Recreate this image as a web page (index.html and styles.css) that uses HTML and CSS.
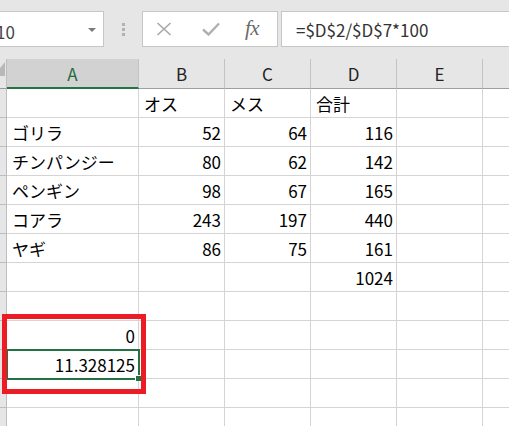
FILE: index.html
```html
<!DOCTYPE html>
<html lang="ja">
<head>
<meta charset="utf-8">
<link rel="stylesheet" href="styles.css">
</head>
<body>
<div class="app">
  <div class="toolbar">
    <div class="namebox">
      <span class="namebox-text">10</span>
      <svg class="dropdown" width="8" height="4" viewBox="0 0 8 4"><polygon points="0,0 8,0 4,4" fill="#7a7a7a"/></svg>
    </div>
    <div class="grip"><span></span><span></span><span></span></div>
    <div class="iconbox">
      <svg class="ico" width="16" height="14" viewBox="0 0 16 14"><path d="M1.5 1 L14.5 13 M14.5 1 L1.5 13" stroke="#a8a8a8" stroke-width="1.6" fill="none"/></svg>
      <svg class="ico" width="18" height="14" viewBox="0 0 18 14"><path d="M1 7.5 L6.5 12.5 L17 1.5" stroke="#b0b0b0" stroke-width="2.4" fill="none"/></svg>
      <span class="fx">fx</span>
    </div>
    <div class="formula">=$D$2/$D$7*100</div>
  </div>

  <div class="sheet">
    <div class="corner"><svg width="6" height="29" viewBox="0 0 6 29"><polygon points="0,9 5,3 5,17 0,17" fill="#b8b8b8"/></svg></div>
    <div class="colhead sel">A</div>
    <div class="colhead">B</div>
    <div class="colhead">C</div>
    <div class="colhead">D</div>
    <div class="colhead">E</div>
    <div class="colhead last"></div>

    <div class="rh"></div><div class="c"></div><div class="c">オス</div><div class="c">メス</div><div class="c">合計</div><div class="c"></div><div class="c last"></div>
    <div class="rh"></div><div class="c">ゴリラ</div><div class="c n">52</div><div class="c n">64</div><div class="c n">116</div><div class="c"></div><div class="c last"></div>
    <div class="rh"></div><div class="c">チンパンジー</div><div class="c n">80</div><div class="c n">62</div><div class="c n">142</div><div class="c"></div><div class="c last"></div>
    <div class="rh"></div><div class="c">ペンギン</div><div class="c n">98</div><div class="c n">67</div><div class="c n">165</div><div class="c"></div><div class="c last"></div>
    <div class="rh"></div><div class="c">コアラ</div><div class="c n">243</div><div class="c n">197</div><div class="c n">440</div><div class="c"></div><div class="c last"></div>
    <div class="rh"></div><div class="c">ヤギ</div><div class="c n">86</div><div class="c n">75</div><div class="c n">161</div><div class="c"></div><div class="c last"></div>
    <div class="rh"></div><div class="c"></div><div class="c"></div><div class="c"></div><div class="c n">1024</div><div class="c"></div><div class="c last"></div>
    <div class="rh"></div><div class="c"></div><div class="c"></div><div class="c"></div><div class="c"></div><div class="c"></div><div class="c last"></div>
    <div class="rh"></div><div class="c n">0</div><div class="c"></div><div class="c"></div><div class="c"></div><div class="c"></div><div class="c last"></div>
    <div class="rh"></div><div class="c n active">11.328125<span class="fill-handle"></span></div><div class="c"></div><div class="c"></div><div class="c"></div><div class="c"></div><div class="c last"></div>
    <div class="rh"></div><div class="c"></div><div class="c"></div><div class="c"></div><div class="c"></div><div class="c"></div><div class="c last"></div>
    <div class="rh"></div><div class="c"></div><div class="c"></div><div class="c"></div><div class="c"></div><div class="c"></div><div class="c last"></div>
  </div>

  <div class="highlight"></div>
</div>
</body>
</html>
```

FILE: styles.css
```css
* { box-sizing: border-box; }
html, body {
  margin: 0;
  padding: 0;
  width: 509px;
  height: 426px;
  overflow: hidden;
  background: #e6e6e6;
}
.app {
  position: relative;
  width: 509px;
  height: 426px;
  overflow: hidden;
  font-family: "Noto Sans CJK JP", "Noto Sans", sans-serif;
  font-size: 17px;
  color: #000;
}

/* ---------- toolbar ---------- */
.toolbar {
  height: 59px;
  display: flex;
  align-items: flex-start;
  padding-top: 11px;
  background: #e6e6e6;
}
.namebox {
  width: 104px;
  height: 36px;
  background: #fff;
  border: 1px solid #c6c6c6;
  border-left: none;
  display: flex;
  align-items: center;
  justify-content: space-between;
  padding: 4px 7px 0 0;
  overflow: hidden;
}
.namebox-text {
  color: #444;
  margin-left: -4px;
  line-height: 1;
}
.dropdown { margin-top: -3px; }
.grip {
  width: 38px;
  height: 36px;
  display: flex;
  flex-direction: column;
  align-items: center;
  justify-content: center;
  gap: 2px;
  padding-left: 1px;
}
.grip span {
  width: 3px;
  height: 3px;
  background: #b2b2b2;
}
.iconbox {
  width: 136px;
  height: 36px;
  background: #fff;
  border: 1px solid #c6c6c6;
  display: flex;
  align-items: center;
  padding-left: 13px;
  gap: 30px;
}
.fx {
  font-family: "Liberation Serif", serif;
  font-style: italic;
  font-size: 21px;
  color: #6a6a6a;
  margin-left: -5px;
  letter-spacing: -0.5px;
  line-height: 1;
  margin-top: -2px;
}
.formula {
  flex: 1;
  margin-left: 3px;
  height: 36px;
  background: #fff;
  border: 1px solid #c6c6c6;
  border-right: none;
  display: flex;
  align-items: center;
  padding-left: 14px;
  color: #333;
  line-height: 1;
}

/* ---------- sheet ---------- */
.sheet {
  display: grid;
  grid-template-columns: 7px 132px 86px 86px 86px 86px 1fr;
  grid-template-rows: 30px;
  grid-auto-rows: 29px;
  background: #fff;
}
.corner {
  background: #e6e6e6;
  border-right: 1px solid #bdbdbd;
  border-bottom: 1px solid #9b9b9b;
  overflow: hidden;
}
.corner svg { display: block; }
.colhead {
  background: #e6e6e6;
  border-right: 1px solid #c3c3c3;
  border-bottom: 1px solid #9f9f9f;
  display: flex;
  align-items: center;
  justify-content: center;
  color: #222;
  line-height: 1;
  padding-bottom: 1px;
}
.colhead.sel {
  background: #d2d2d2;
  border-bottom: 2px solid #217346;
  color: #1e6b40;
  padding-bottom: 0;
}
.colhead.last { border-right: none; }
.rh {
  background: #e6e6e6;
  border-right: 1px solid #bdbdbd;
  border-bottom: 1px solid #bdbdbd;
}
.c {
  position: relative;
  border-right: 1px solid #d4d4d4;
  border-bottom: 1px solid #d4d4d4;
  display: flex;
  align-items: center;
  padding: 0 3px 0 5px;
  white-space: nowrap;
  line-height: 1;
}
.c.n { justify-content: flex-end; }
.c.last { border-right: none; }
.c.active {
  outline: 2px solid #217346;
  outline-offset: -1px;
  z-index: 2;
}
.fill-handle {
  position: absolute;
  right: -3px;
  bottom: -3px;
  width: 6px;
  height: 6px;
  background: #217346;
  border: 1px solid #fff;
  border-width: 1px 0 0 1px;
}

/* ---------- red annotation box ---------- */
.highlight {
  position: absolute;
  left: 2px;
  top: 314px;
  width: 144px;
  height: 80px;
  border: 5px solid #ec1c24;
  z-index: 5;
}
```
